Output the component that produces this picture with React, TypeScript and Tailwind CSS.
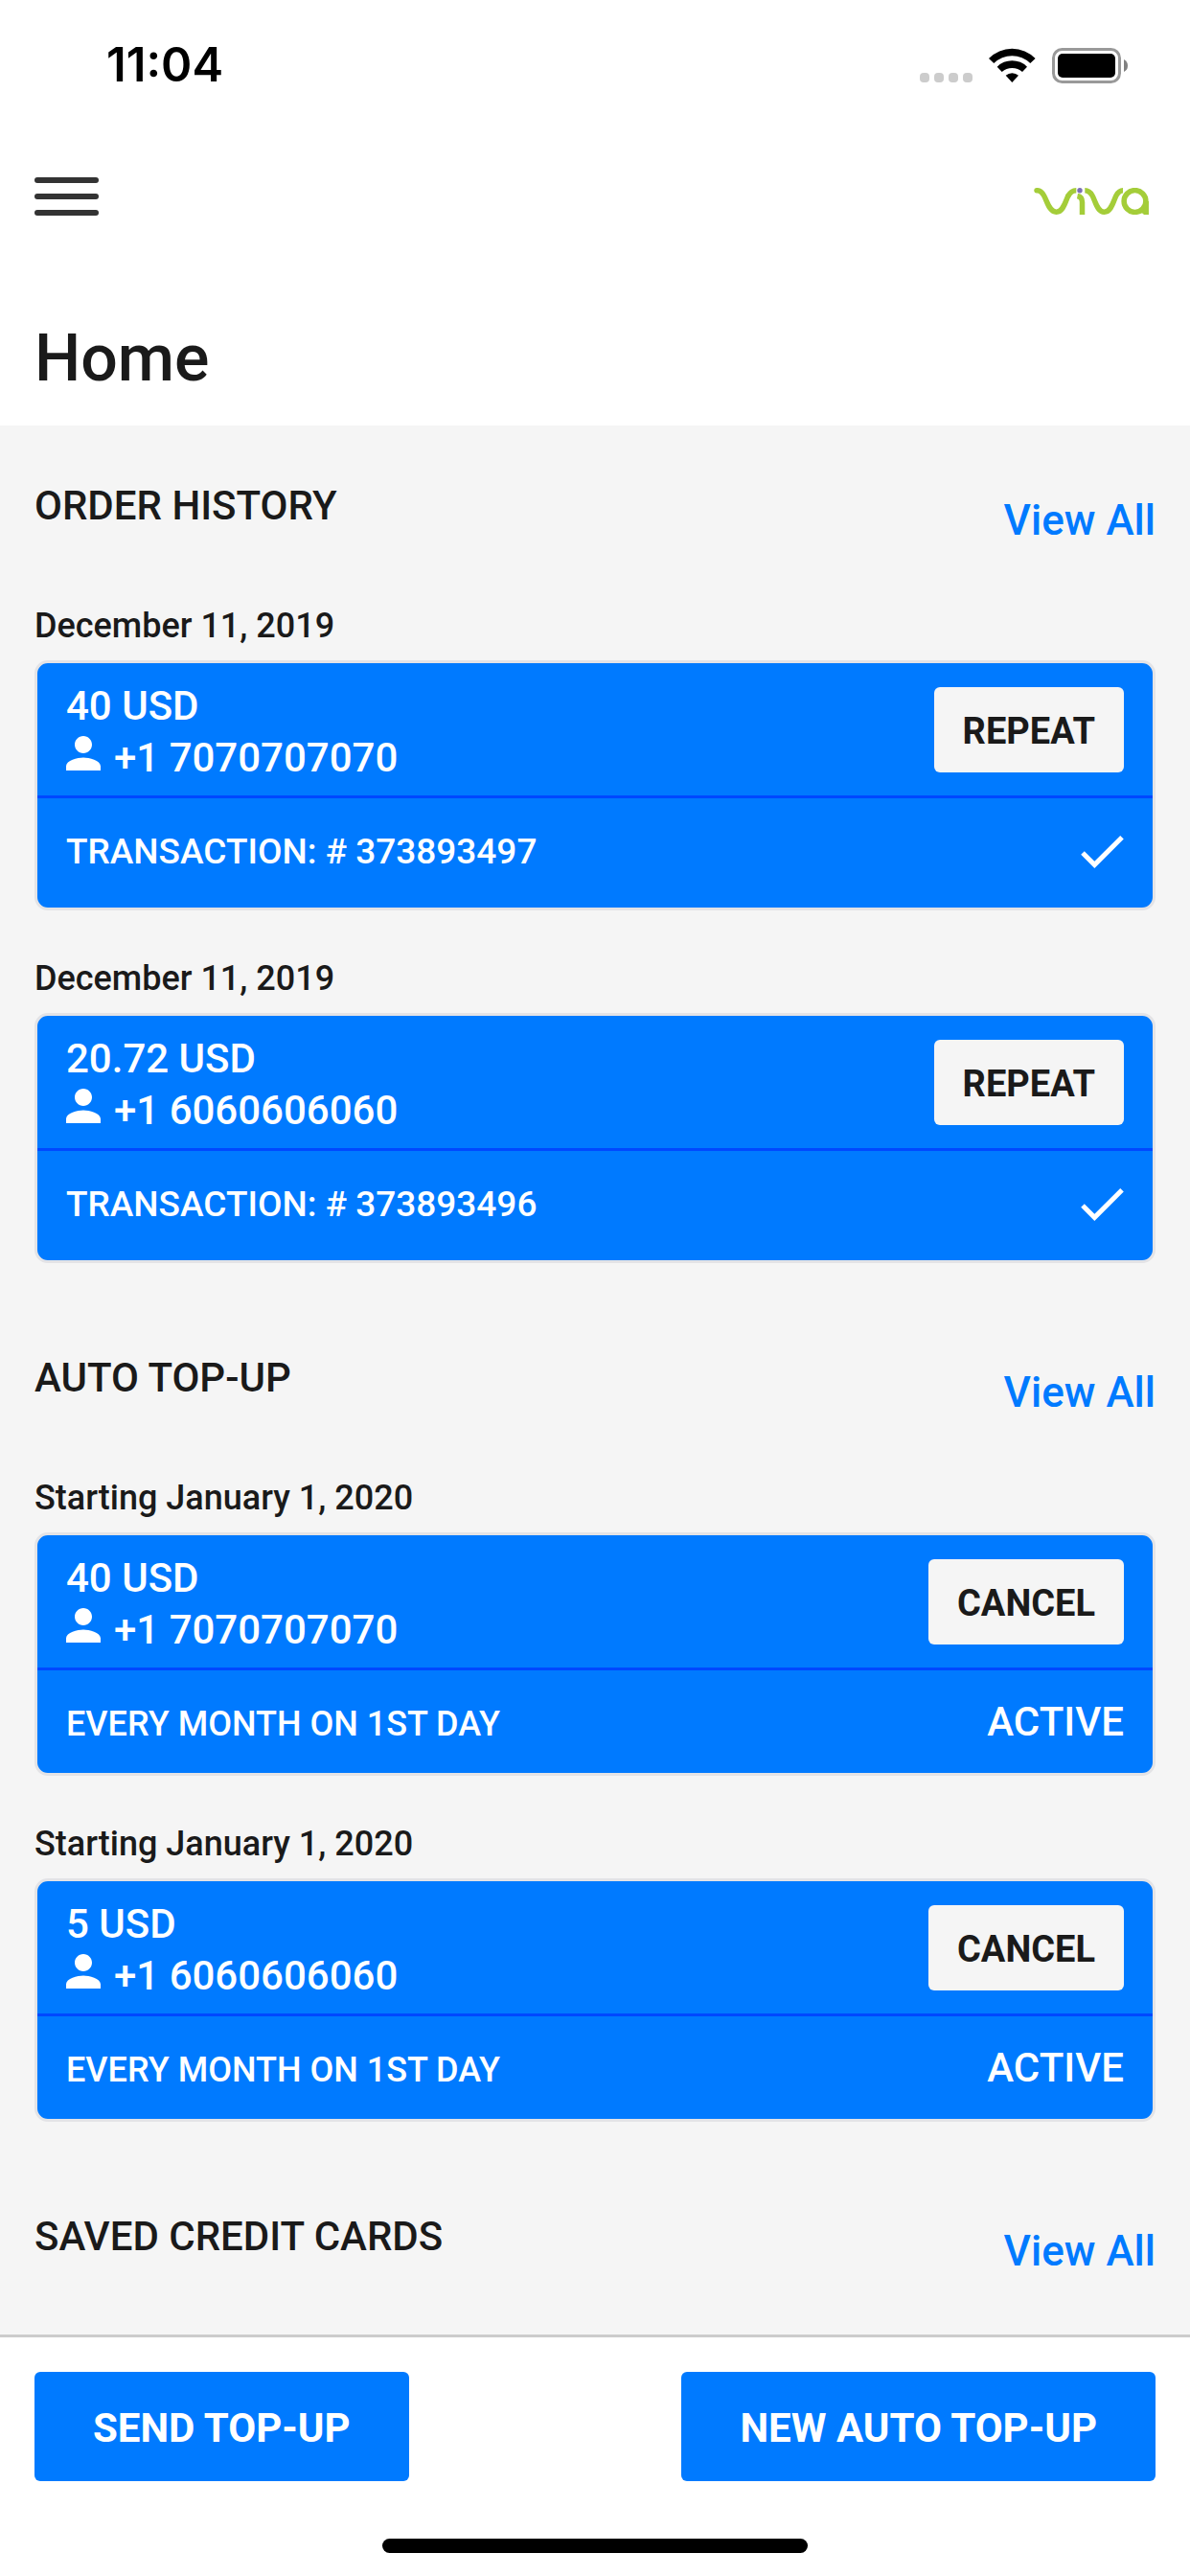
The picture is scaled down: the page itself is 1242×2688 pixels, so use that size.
import React from "react";

type Entry = {
    date: string;
    amount: string;
    phone: string;
    detail: string;
};

const orders: Entry[] = [
    { date: "December 11, 2019", amount: "40 USD", phone: "+1 7070707070", detail: "TRANSACTION: # 373893497" },
    { date: "December 11, 2019", amount: "20.72 USD", phone: "+1 6060606060", detail: "TRANSACTION: # 373893496" },
];

const autoTopUps: Entry[] = [
    { date: "Starting January 1, 2020", amount: "40 USD", phone: "+1 7070707070", detail: "EVERY MONTH ON 1ST DAY" },
    { date: "Starting January 1, 2020", amount: "5 USD", phone: "+1 6060606060", detail: "EVERY MONTH ON 1ST DAY" },
];

const StatusBar = () => (
    <div className="flex h-[136px] items-center justify-between pl-[111px] pr-[65px]">
        <span className="font-['Inter'] text-[49px] leading-[56px] font-semibold text-black">11:04</span>
        <svg className="h-[37px] w-[217px]" viewBox="0 0 217 37" aria-hidden="true">
            <g fill="#cccccc">
                <rect x="0" y="26" width="10" height="10" rx="4" />
                <rect x="15" y="26" width="10" height="10" rx="4" />
                <rect x="30" y="26" width="10" height="10" rx="4" />
                <rect x="45" y="26" width="10" height="10" rx="4" />
            </g>
            <path d="M72 11A34 34 0 0 1 120.6 11L115.3 16A27 27 0 0 0 77.3 16Z" />
            <path d="M80.7 19.7A22 22 0 0 1 112 19.7L107 25A16 16 0 0 0 85.7 25Z" />
            <path d="M89.7 28.7A10 10 0 0 1 103 28.7L96.3 36Z" />
            <rect x="139.5" y="1.5" width="69" height="34" rx="9" fill="none" stroke="#999999" strokeWidth="3" />
            <rect x="144" y="6" width="60" height="25" rx="5" />
            <path d="M213 12q4 2 4 6.5t-4 6.5z" fill="#808080" />
        </svg>
    </div>
);

const VivaLogo = () => (
    <svg className="h-7 w-[120px]" viewBox="0 0 120 28" role="img" aria-label="viva">
        <g fill="none" stroke="#a4cd39" strokeWidth="5.5">
            <path strokeLinecap="round" d="M3 2.8C6 2.4 8.500 4.500 10.500 8C14 14 16 25.200 23.500 25.200C31 25.200 33 14 36 8" />
            <path d="M35.500 9C38 4.500 40 2.800 44.300 2.800" />
            <path d="M45.500 8.500Q50.500 9.500 50.500 15v13" />
            <path d="M53.300 2.800C57 2.800 59 4.500 61 8C64.500 14 66 25.200 73.500 25.200C81 25.200 83 14 86 8C88 4.500 90 2.800 93 2.800" />
            <circle cx="105.5" cy="14" r="11.4" />
            <path d="M117.200 14v14" />
        </g>
        <path d="M111 26l7-6v8z" fill="#a4cd39" />
        <circle cx="48" cy="2.7" r="2.7" fill="#7b6fb5" />
    </svg>
);

const SectionHeader = ({ title }: { title: string }) => (
    <div className="flex h-[69px] items-start justify-between leading-[54px] font-medium">
        <h2 className="text-[42px] text-[#1a1a1a]">{title}</h2>
        <a href="#" className="self-end text-[44px] text-[#007aff]">View All</a>
    </div>
);

type CardProps = {
    entry: Entry;
    action: string;
    children: React.ReactNode;
};

const EntryCard = ({ entry, action, children }: CardProps) => (
    <article>
        <h3 className="mb-3 pt-px text-[36px] leading-[47px] font-medium text-[#1a1a1a]">{entry.date}</h3>
        <div className="rounded-[14px] border-[3px] border-[#e3e3e6] bg-[#007aff] font-medium text-white">
            <div className="flex items-start justify-between border-b-[3px] border-[#0048ff] px-[30px] pt-[18px] pb-3">
                <div className="text-[42px] leading-[54px]">
                    <p>{entry.amount}</p>
                    <p className="flex items-start gap-[14px]">
                        <svg className="mt-1 size-9" viewBox="4 4 16 16" fill="currentColor" aria-hidden="true">
                            <path d="M12 12c2.21 0 4-1.79 4-4s-1.79-4-4-4-4 1.79-4 4 1.79 4 4 4zm0 2c-2.67 0-8 1.34-8 4v2h16v-2c0-2.66-5.33-4-8-4z" />
                        </svg>
                        {entry.phone}
                    </p>
                </div>
                <button type="button" className="mt-[7px] h-[89px] rounded-md bg-[#f5f5f5] px-[30px] pt-1 text-[38px] leading-[47px] font-bold text-[#1a1a1a]">
                    {action}
                </button>
            </div>
            {children}
        </div>
    </article>
);

export default function App() {
    return (
        <div className="flex min-h-screen flex-col bg-white font-['Roboto',sans-serif]">
            <header>
                <StatusBar />
                <div className="flex items-start justify-between pt-[49px] pr-[43px] pl-9">
                    <button type="button" aria-label="Open menu" className="flex w-[67px] flex-col gap-[11px]">
                        <span className="h-[6px] w-full rounded-full bg-[#333333]" />
                        <span className="h-[6px] w-full rounded-full bg-[#333333]" />
                        <span className="h-[6px] w-full rounded-full bg-[#333333]" />
                    </button>
                    <div className="pt-[11px]">
                        <VivaLogo />
                    </div>
                </div>
                <h1 className="px-9 pt-[106px] pb-[27px] text-[68px] leading-[86px] font-medium text-[#1a1a1a]">Home</h1>
            </header>

            <main className="flex flex-1 flex-col gap-[93px] bg-[#f5f5f5] px-9 pt-[57px] pb-[60px]">
                <section>
                    <SectionHeader title="ORDER HISTORY" />
                    <div className="mt-[59px] flex flex-col gap-[47px]">
                        {orders.map((entry) => (
                            <EntryCard key={entry.detail} entry={entry} action="REPEAT">
                                <div className="flex h-[114px] items-center justify-between px-[30px] pb-[3px] text-[37px] leading-[47px]">
                                    <p>{entry.detail}</p>
                                    <svg className="h-[34px] w-[45px]" viewBox="3.41 5.59 17.59 13.41" fill="currentColor" role="img" aria-label="Completed">
                                        <path d="M9 16.17 4.83 12l-1.42 1.41L9 19 21 7l-1.41-1.41z" />
                                    </svg>
                                </div>
                            </EntryCard>
                        ))}
                    </div>
                </section>

                <section>
                    <SectionHeader title="AUTO TOP-UP" />
                    <div className="mt-[59px] flex flex-col gap-[47px]">
                        {autoTopUps.map((entry) => (
                            <EntryCard key={entry.amount} entry={entry} action="CANCEL">
                                <div className="flex h-[107px] items-baseline justify-between px-[30px] pt-[27px]">
                                    <p className="text-[36px] leading-[47px]">{entry.detail}</p>
                                    <p className="text-[42px] leading-[54px]">ACTIVE</p>
                                </div>
                            </EntryCard>
                        ))}
                    </div>
                </section>

                <section>
                    <SectionHeader title="SAVED CREDIT CARDS" />
                </section>
            </main>

            <footer className="border-t-[3px] border-[#cccccc] bg-white px-9 pt-9 pb-6">
                <div className="flex justify-between text-[42px] leading-[54px] font-bold text-white">
                    <button type="button" className="rounded-md bg-[#007aff] px-[61px] pt-8 pb-7">SEND TOP-UP</button>
                    <button type="button" className="rounded-md bg-[#007aff] px-[61px] pt-8 pb-7">NEW AUTO TOP-UP</button>
                </div>
                <div className="mx-auto mt-[60px] h-[15px] w-[444px] rounded-full bg-black" />
            </footer>
        </div>
    );
}
